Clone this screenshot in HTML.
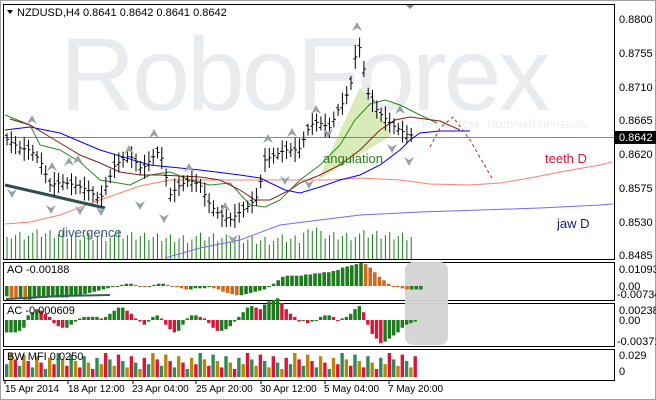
<!DOCTYPE html>
<html><head><meta charset="utf-8">
<style>
html,body{margin:0;padding:0;background:#fff;}
svg{display:block;font-family:"Liberation Sans",Tahoma,sans-serif;}
</style></head><body>
<svg id="s" width="656" height="400" viewBox="0 0 656 400" xmlns="http://www.w3.org/2000/svg">
<rect x="0" y="0" width="656" height="400" fill="#ffffff"/>
<rect x="0.5" y="0.5" width="655" height="399" fill="none" stroke="#a0a0a0"/>
<text x="60" y="110" font-size="104" fill="#e9ecef" letter-spacing="-3">RoboForex</text>
<rect x="58" y="25" width="10" height="85" fill="#fff"/>
<text x="330" y="128" font-size="10" fill="#eaedf0">ПОЛЬЗУЙСЯ  ИНСТРУМЕНТОМ · ПОЛУЧАЙ ПРИБЫЛЬ</text>
<g id="main"></g>
<rect x="3.5" y="4.5" width="611" height="255" fill="none" stroke="#000"/>
<rect x="3.5" y="262.5" width="611" height="38" fill="none" stroke="#000"/>
<rect x="3.5" y="303.5" width="611" height="43" fill="none" stroke="#000"/>
<rect x="3.5" y="349.5" width="611" height="31" fill="none" stroke="#000"/>
<rect x="405" y="262" width="43" height="83" rx="8" fill="#d4d4d4" opacity="0.95"/>
<g id="ind"></g>
<g font-size="11" fill="#000">
<path d="M7 10 L13 10 L10 14Z" fill="#000"/>
<text x="17" y="16">NZDUSD,H4  0.8641 0.8642 0.8641 0.8642</text>
<text x="7" y="273">AO -0.00188</text>
<text x="7" y="314">AC -0.000609</text>
<text x="7" y="360">BW MFI 0.0250</text>
<text x="619" y="23">0.8800</text>
<text x="619" y="57">0.8755</text>
<text x="619" y="91">0.8710</text>
<text x="619" y="124">0.8665</text>
<text x="619" y="158">0.8620</text>
<text x="619" y="192">0.8575</text>
<text x="619" y="226">0.8530</text>
<text x="619" y="259">0.8485</text>
<text x="619" y="273">0.01093</text>
<text x="619" y="290">0.00</text>
<text x="617" y="298">-0.00734</text>
<text x="619" y="314">0.002383</text>
<text x="619" y="324">0.00</text>
<text x="617" y="345">-0.00371</text>
<text x="619" y="359">0.029</text>
<text x="619" y="375">0</text>
</g>
<g font-size="10" fill="#000">
<text x="5" y="392">15 Apr 2014</text>
<text x="68" y="392">18 Apr 12:00</text>
<text x="132" y="392">23 Apr 04:00</text>
<text x="196" y="392">25 Apr 20:00</text>
<text x="260" y="392">30 Apr 12:00</text>
<text x="324" y="392">5 May 04:00</text>
<text x="388" y="392">7 May 20:00</text>
</g>
<rect x="615" y="131" width="41" height="13" fill="#000"/>
<text x="619" y="141" font-size="11" fill="#fff">0.8642</text>
<g font-size="13">
<text x="323" y="163" fill="#2e7d1a">angulation</text>
<text x="58" y="237" fill="#3d5a78">divergence</text>
<text x="545" y="163" fill="#dc143c">teeth D</text>
<text x="557" y="228" fill="#191970">jaw D</text>
</g>
</svg>
<script>
var NS="http://www.w3.org/2000/svg";
function el(p,t,a){var e=document.createElementNS(NS,t);for(var k in a)e.setAttribute(k,a[k]);p.appendChild(e);return e;}
var m=document.getElementById('main'),ind=document.getElementById('ind');
function pl(pts,c,w,d){var s=pts.map(function(p){return p.join(',')}).join(' ');var a={points:s,fill:'none',stroke:c,'stroke-width':w||1};if(d)a['stroke-dasharray']=d;el(m,'polyline',a);}
el(m,'polygon',{points:'318,180 360,87 392,135',fill:'#d8ebb8'});
for(var x=7;x<412;x+=4.3){var h=16+((x*7)%13)+((x*13)%7);if(x>300&&x<320)h+=8;el(m,'line',{x1:x,y1:259,x2:x,y2:259-h*0.85,stroke:'#1e7b1e','stroke-width':1});}
el(m,'line',{x1:4,y1:137.5,x2:614,y2:137.5,stroke:'#7a8a9a'});
pl([[5,224],[30,222],[60,215],[100,200],[140,186],[170,180],[210,180],[250,180],[290,180],[330,180],[360,178],[400,180],[430,184],[470,185],[500,183],[530,178],[560,172],[600,165],[612,162]],'#fa8072',1);
pl([[165,258],[200,248],[240,240],[280,225],[320,220],[360,215],[420,212],[480,210],[540,208],[600,205],[613,204]],'#7b68ee',1);
pl([[5,130],[30,127],[60,133],[100,150],[150,165],[200,170],[240,175],[260,178],[285,190],[300,193],[320,187],[340,180],[360,175],[380,165],[400,150],[410,140],[420,133],[440,131],[470,131]],'#0000ff',1);
pl([[5,115],[30,125],[40,145],[60,150],[80,162],[100,180],[130,185],[150,175],[170,172],[190,180],[210,185],[230,183],[250,205],[265,207],[280,200],[300,180],[320,165],[340,145],[355,120],[370,104],[385,100],[400,105],[420,115],[437,123]],'#228b22',1);
pl([[10,119],[30,125],[55,140],[80,155],[100,163],[120,172],[140,175],[160,175],[180,176],[200,177],[220,180],[240,190],[255,200],[270,200],[290,190],[300,183],[320,175],[340,165],[360,150],[380,130],[395,120],[410,117],[440,121],[460,130]],'#8b1a1a',1);
pl([[430,147],[440,128],[453,117],[470,140],[493,180]],'#b22222',1,'3,3');
el(m,'line',{x1:5,y1:185,x2:105,y2:208,stroke:'#2f4f4f','stroke-width':3});
var kp=[[8,140],[20,148],[30,150],[40,160],[50,185],[62,182],[75,185],[88,190],[100,200],[115,165],[130,155],[142,170],[150,160],[160,150],[170,195],[180,185],[190,180],[200,185],[210,205],[220,215],[230,220],[240,212],[250,205],[258,195],[265,160],[275,155],[285,150],[295,150],[300,148],[310,125],[318,122],[330,128],[338,110],[345,100],[352,80],[357,45],[362,50],[366,90],[372,100],[378,112],[385,118],[392,125],[400,130],[408,135],[412,135]];
function py(x){for(var i=1;i<kp.length;i++)if(x<=kp[i][0]){var a=kp[i-1],b=kp[i];return a[1]+(b[1]-a[1])*(x-a[0])/(b[0]-a[0]);}return 135;}
for(var x=7,i=0;x<412;x+=4.3,i++){var c=py(x),r=6+((i*5)%7);var o=c+(((i*3)%5)-2)*2;el(m,'line',{x1:x,y1:c-r,x2:x,y2:c+r,stroke:'#000'});el(m,'line',{x1:x-2,y1:o,x2:x,y2:o,stroke:'#000'});el(m,'line',{x1:x,y1:c,x2:x+2,y2:c,stroke:'#000'});}
var up=[[32,118],[52,165],[69,160],[78,158],[129,148],[154,132],[189,166],[225,205],[268,137],[292,131],[316,108],[357,25],[400,108]],dn=[[12,195],[51,211],[80,212],[101,213],[140,207],[164,220],[233,241],[285,182],[309,186],[328,135],[392,150],[409,163]];
up.forEach(function(p){el(m,'path',{d:'M'+(p[0]-5)+' '+(p[1]+6)+' L'+p[0]+' '+(p[1]-3)+' L'+(p[0]+5)+' '+(p[1]+6)+' L'+p[0]+' '+(p[1]+3)+'Z',fill:'#9aa0a8'});});
dn.forEach(function(p){el(m,'path',{d:'M'+(p[0]-5)+' '+(p[1]-6)+' L'+p[0]+' '+(p[1]+3)+' L'+(p[0]+5)+' '+(p[1]-6)+' L'+p[0]+' '+(p[1]-3)+'Z',fill:'#9aa0a8'});});
el(m,'path',{d:'M405 4 L415 4 L410 9Z',fill:'#7a8a9a'});
var ao=[-9,-10,-11,-11,-12,-12,-11,-10,-10,-10,-10,-10,-10,-10,-9,-9,-8,-7,-6,-5,-4,-3,-2,-1,0,1,2,2,1,0,-1,0,1,2,2,1,0,-1,-2,-3,-3,-2,-2,-2,-1,-2,-3,-5,-6,-7,-8,-8,-7,-6,-5,-4,-3,-1,2,5,8,9,9,9,9,10,10,11,11,12,12,13,14,16,17,18,19,20,19,16,12,8,5,2,0,-1,-2,-3,-3,-3,-3];
for(var i=0;i<ao.length;i++){var x=5+i*4.6,v=ao[i],prev=i?ao[i-1]:v;var col=v>=prev?'#1e7b1e':'#d2691e';var h=Math.max(Math.abs(v)*1.15,1);el(ind,'rect',{x:x,y:v>0?286-h:286,width:3.6,height:h,fill:col});}
el(ind,'polyline',{points:'6,299 25,298 60,296 110,295',fill:'none',stroke:'#3c5a5a','stroke-width':2});
var ac=[-8,-8,-8,-7,-5,3,5,7,6,4,2,-2,-4,-5,-5,-3,-1,1,2,2,2,2,1,2,4,6,8,8,6,4,1,-1,-3,-1,2,3,1,-3,-6,-8,-7,-3,1,3,3,2,1,-2,-5,-7,-7,-6,-4,-1,2,5,8,9,8,7,10,12,13,14,11,7,4,2,-1,0,-2,-1,0,2,3,3,2,0,1,2,4,7,9,5,-3,-9,-12,-15,-14,-12,-10,-8,-5,-3,-2,-1];
for(var i=0;i<ac.length;i++){var x=5+i*4.3,v=ac[i],prev=i?ac[i-1]:v;var col=v>=prev?'#1e7b1e':'#dc143c';var h=Math.max(Math.abs(v)*1.55,1);el(ind,'rect',{x:x,y:v>0?320-h:320,width:3.4,height:h,fill:col});}
var cols=['#2e8b57','#b8860b','#dc143c','#0000ff'];
for(var i=0;i<96;i++){var x=5+i*4.3;var t=(i*7+3)%11,ci=(i*5+Math.floor(i/3))%4;var h=ci==3?20+(i%5)*2:8+t*1.6;el(ind,'rect',{x:x,y:377-h,width:ci==3?1:3.4,height:h,fill:cols[ci]});}
[5,68,133,196,261,325,389].forEach(function(x){el(ind,'line',{x1:x,y1:380,x2:x,y2:384,stroke:'#000'});});
</script>
</body></html>
